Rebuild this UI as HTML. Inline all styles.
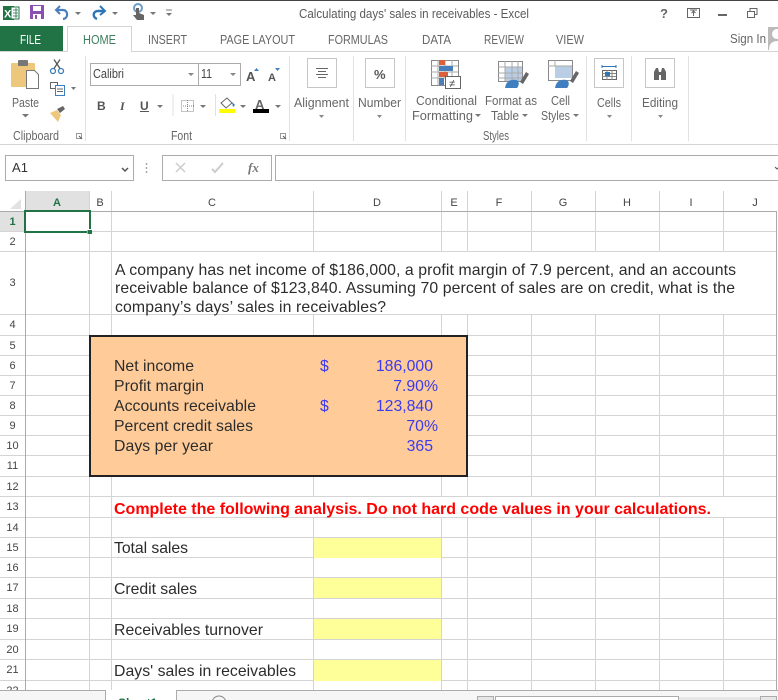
<!DOCTYPE html>
<html><head><meta charset="utf-8"><style>
html,body{margin:0;padding:0;background:#fff;width:778px;height:700px;overflow:hidden}
svg{display:block;position:absolute;left:0;top:0}
text{font-family:"Liberation Sans",sans-serif}
.r{font-size:12.5px;fill:#666}
.h{font-size:11px;fill:#444;text-anchor:middle}
.d{font-size:15.8px;fill:#2c2c2c}
.b{font-size:15.8px;fill:#3a3af0}
.e{text-anchor:end}
</style></head><body>
<svg width="778" height="700" viewBox="0 0 778 700" xmlns="http://www.w3.org/2000/svg">
<rect width="778" height="700" fill="#fff"/>
<rect width="778" height="1" fill="#444"/>
<!-- QAT -->
<rect x="3" y="6" width="11" height="14" fill="#217346"/><rect x="11" y="7" width="8" height="12" fill="#fff" stroke="#217346"/>
<path d="M13 10h5M13 13h5M13 16h5M16 8v10" stroke="#217346" stroke-width=".8"/>
<text x="4" y="17.5" style="font-size:11px;font-weight:bold;fill:#fff">X</text>
<rect x="30" y="5" width="14" height="14" fill="#8a4fb0"/><rect x="33" y="6" width="8" height="5" fill="#fff"/><rect x="33" y="14" width="8" height="5" fill="#fff"/><rect x="35" y="15" width="2" height="4" fill="#8a4fb0"/>
<path d="M60 6l-4 4 4 4" fill="none" stroke="#4a7ebb" stroke-width="2"/><path d="M57 10h6c5 0 6 8 0 9" fill="none" stroke="#4a7ebb" stroke-width="2.2"/>
<path d="M100 6l5 5-5 4" fill="none" stroke="#2e75b6" stroke-width="2"/><path d="M104 11h-6c-5 0-6 6-1 8" fill="none" stroke="#2e75b6" stroke-width="2.4"/>
<circle cx="138" cy="8" r="4" fill="none" stroke="#6f9bc8" stroke-width="2"/><path d="M136 8h3v5l5 2v5h-7l-4-5 3 0z" fill="#666"/>
<path d="M75 12h6l-3 3zM112 12h6l-3 3zM150 12h6l-3 3z" fill="#777"/>
<path d="M166 10h6" stroke="#777"/><path d="M166 13h6l-3 3z" fill="#777"/>
<text x="299" y="18" textLength="230" lengthAdjust="spacingAndGlyphs" style="font-size:12.5px;fill:#5a5a5a">Calculating days' sales in receivables - Excel</text>
<text x="660" y="18" style="font-size:13px;font-weight:bold;fill:#666">?</text>
<rect x="687.5" y="8.5" width="12" height="9" fill="none" stroke="#666"/><path d="M693.5 16v-5M691.5 13l2-2 2 2M690 10h7" fill="none" stroke="#666"/>
<rect x="718" y="14" width="9" height="2" fill="#666"/>
<rect x="747.5" y="11.5" width="7" height="6" fill="none" stroke="#666"/><path d="M750 11v-2.500h7v6h-2" fill="none" stroke="#666"/>
<!-- tabs -->
<rect x="0" y="51" width="778" height="1" fill="#d4d4d4"/>
<rect x="0" y="26" width="63" height="25" fill="#217346"/>
<rect x="67.500" y="26.500" width="64" height="25" fill="#fff" stroke="#d4d4d4"/><rect x="68" y="50" width="63" height="3" fill="#fff"/>
<text x="20" y="44" textLength="21" lengthAdjust="spacingAndGlyphs" style="font-size:12.5px;fill:#fff">FILE</text>
<text x="83" y="44" textLength="33" lengthAdjust="spacingAndGlyphs" style="font-size:12.5px;fill:#3e8060">HOME</text>
<text x="148" y="44" textLength="39" lengthAdjust="spacingAndGlyphs" class="r">INSERT</text>
<text x="220" y="44" textLength="75" lengthAdjust="spacingAndGlyphs" class="r">PAGE LAYOUT</text>
<text x="328" y="44" textLength="60" lengthAdjust="spacingAndGlyphs" class="r">FORMULAS</text>
<text x="422" y="44" textLength="29" lengthAdjust="spacingAndGlyphs" class="r">DATA</text>
<text x="484" y="44" textLength="40" lengthAdjust="spacingAndGlyphs" class="r">REVIEW</text>
<text x="556" y="44" textLength="28" lengthAdjust="spacingAndGlyphs" class="r">VIEW</text>
<text x="730" y="43" textLength="36" lengthAdjust="spacingAndGlyphs" class="r">Sign In</text>
<rect x="768" y="27" width="10" height="23" fill="#bbb"/><circle cx="777" cy="34" r="5" fill="#fff"/><path d="M769 50c0-7 4-9 9-9v9z" fill="#fff"/>
<!-- ribbon -->
<rect x="0" y="144" width="778" height="1" fill="#d4d4d4"/>
<path d="M85.500 56v85M289.500 56v85M353.500 56v85M405.500 56v85M586.500 56v85M631.500 56v85M688.500 56v85" stroke="#e1e1e1"/>
<!-- paste -->
<rect x="11" y="63" width="24" height="24" rx="1" fill="#edc77c"/><rect x="18" y="60" width="10" height="6" rx="1" fill="#777"/>
<path d="M26.500 70.500h8l4 4v14h-12z" fill="#fff" stroke="#777"/>
<text x="12" y="107" textLength="27" lengthAdjust="spacingAndGlyphs" class="r">Paste</text>
<path d="M22 114h7l-3.500 3.500z" fill="#777"/>
<circle cx="53" cy="71" r="2.500" fill="none" stroke="#3f7fbf" stroke-width="1.300"/><circle cx="61" cy="71" r="2.500" fill="none" stroke="#3f7fbf" stroke-width="1.300"/><path d="M54 68.500l6-9M60 68.500l-6-9" stroke="#555" stroke-width="1.300"/>
<path d="M50.500 82.500h7v6h-7z" fill="#fff" stroke="#666"/><rect x="55.500" y="85.500" width="9" height="10" fill="#fff" stroke="#3f7fbf"/><path d="M57 89h6M57 91.500h6" stroke="#666"/>
<path d="M71 87h5l-2.500 3z" fill="#777"/>
<path d="M50 113l7-3 4 5-3 7z" fill="#edc77c"/><path d="M57 109l6-3 2 3-5 4z" fill="#666"/>
<text x="13" y="140" textLength="46" lengthAdjust="spacingAndGlyphs" class="r">Clipboard</text>
<rect x="76.500" y="133.500" width="5" height="5" fill="none" stroke="#999"/><path d="M79 136l3 3" stroke="#555"/>
<!-- font -->
<rect x="90.500" y="63.500" width="150" height="22" fill="#fff" stroke="#ababab"/><path d="M198.500 63v23" stroke="#ababab"/>
<text x="93" y="78" textLength="31" lengthAdjust="spacingAndGlyphs" style="font-size:12.5px;fill:#444">Calibri</text>
<text x="201" y="78" textLength="11" lengthAdjust="spacingAndGlyphs" style="font-size:12.5px;fill:#444">11</text>
<path d="M188 73h6l-3 3zM230 73h6l-3 3z" fill="#888"/>
<text x="246" y="81" style="font-size:13px;fill:#555;font-weight:bold">A</text><path d="M254 71h5l-2.500-3z" fill="#3f7fbf"/>
<text x="268" y="81" style="font-size:11px;fill:#555;font-weight:bold">A</text><path d="M275 68h5l-2.500 3z" fill="#3f7fbf"/>
<text x="97" y="110" style="font-size:12px;font-weight:bold;fill:#555">B</text>
<text x="120" y="110" style="font-size:12px;font-style:italic;font-family:'Liberation Serif',serif;fill:#555;font-weight:bold">I</text>
<text x="140" y="110" style="font-size:12px;font-weight:bold;fill:#555">U</text><rect x="140" y="111" width="9" height="1" fill="#555"/>
<path d="M157 105h6l-3 3zM200 105h6l-3 3zM240 105h6l-3 3zM275 105h6l-3 3z" fill="#777"/>
<rect x="181.500" y="100.500" width="12" height="11" fill="none" stroke="#888" stroke-dasharray="1 1"/><path d="M187.500 100v12M181 106h13" stroke="#888" stroke-dasharray="1 1"/>
<rect x="172.500" y="94" width="1" height="22" fill="#e1e1e1"/><rect x="215" y="94" width="1" height="22" fill="#e1e1e1"/>
<path d="M221 103l6-5 5 5-6 5z" fill="#fff" stroke="#666"/><path d="M232 102l3 3-2 2z" fill="#2e75b6"/>
<rect x="219" y="109" width="16" height="4" fill="#ff0"/>
<text x="255" y="109" style="font-size:13px;font-weight:bold;fill:#666">A</text><rect x="253" y="109" width="16" height="4" fill="#000"/>
<text x="171" y="140" textLength="21" lengthAdjust="spacingAndGlyphs" class="r">Font</text>
<rect x="280.500" y="133.500" width="5" height="5" fill="none" stroke="#999"/><path d="M283 136l3 3" stroke="#555"/>
<!-- alignment -->
<rect x="307.500" y="58.500" width="29" height="29" fill="#fff" stroke="#c6c6c6"/><path d="M316 68.500h12M318 71.500h8M316 74.500h12M318 77.500h8" stroke="#666"/>
<text x="294" y="107" textLength="55" lengthAdjust="spacingAndGlyphs" class="r">Alignment</text><path d="M319 115h5l-2.500 3z" fill="#888"/>
<rect x="365.500" y="58.500" width="29" height="29" fill="#fff" stroke="#c6c6c6"/>
<text x="374" y="79" style="font-size:13px;fill:#555;font-weight:bold">%</text>
<text x="358" y="107" textLength="43" lengthAdjust="spacingAndGlyphs" class="r">Number</text><path d="M377 115h5l-2.500 3z" fill="#888"/>
<!-- styles -->
<rect x="431.500" y="60.500" width="27" height="25" fill="#fff" stroke="#888"/><path d="M431 66h27M431 72h27M431 78h27M438 60v25M445 60v18M452 60v18" stroke="#aaa"/>
<rect x="439" y="60" width="6" height="5" fill="#d9603b"/><rect x="439" y="66" width="14" height="5" fill="#4a7ebb"/><rect x="439" y="72" width="9" height="5" fill="#d9603b"/><rect x="439" y="78" width="5" height="7" fill="#4a7ebb"/>
<rect x="445.500" y="76.500" width="15" height="12" fill="#fff" stroke="#666"/><text x="449" y="87" style="font-size:11px;fill:#444">≠</text>
<text x="416" y="105" textLength="61" lengthAdjust="spacingAndGlyphs" class="r">Conditional</text><text x="412" y="120" textLength="61" lengthAdjust="spacingAndGlyphs" class="r">Formatting</text><path d="M475 114h6l-3 3z" fill="#777"/>
<rect x="498.500" y="61.500" width="24" height="20" fill="#fff" stroke="#888"/><rect x="505" y="67" width="17" height="14" fill="#b9cde5"/><path d="M498 67h24M498 73h24M498 78h24M505 61v20M512 61v20M518 61v20" stroke="#aaa"/>
<path d="M520 82l6-10 3 2-6 10z" fill="#666"/><path d="M505 88c1-7 6-9 11-8 4 1 3 6 1 8z" fill="#3f7fbf"/>
<text x="485" y="105" textLength="52" lengthAdjust="spacingAndGlyphs" class="r">Format as</text><text x="491" y="120" textLength="28" lengthAdjust="spacingAndGlyphs" class="r">Table</text><path d="M522 114h6l-3 3z" fill="#777"/>
<rect x="548.500" y="60.500" width="24" height="20" fill="#fff" stroke="#888"/><rect x="555" y="66" width="17" height="12" fill="#b9cde5"/><path d="M548 66h24M555 60v6" stroke="#aaa"/>
<path d="M570 81l6-10 3 2-6 10z" fill="#666"/><path d="M555 88c1-7 6-9 11-8 4 1 3 6 1 8z" fill="#3f7fbf"/>
<text x="551" y="105" textLength="19" lengthAdjust="spacingAndGlyphs" class="r">Cell</text><text x="541" y="120" textLength="29" lengthAdjust="spacingAndGlyphs" class="r">Styles</text><path d="M573 114h6l-3 3z" fill="#777"/>
<text x="483" y="140" textLength="26" lengthAdjust="spacingAndGlyphs" class="r">Styles</text>
<rect x="594.500" y="58.500" width="29" height="29" fill="#fff" stroke="#c6c6c6"/>
<path d="M602 66.500h14M602 65v3M616 65v3" stroke="#2e75b6"/><rect x="602.500" y="70.500" width="14" height="9" fill="#fff" stroke="#666"/><path d="M602 73.500h14M602 76.500h14M607 70v10M612 70v10" stroke="#888"/><rect x="605" y="72" width="5" height="4" fill="#2e75b6"/>
<text x="597" y="107" textLength="24" lengthAdjust="spacingAndGlyphs" class="r">Cells</text><path d="M607 115h5l-2.500 3z" fill="#888"/>
<rect x="645.500" y="58.500" width="29" height="29" fill="#fff" stroke="#c6c6c6"/>
<path d="M654 80v-8l2-4h2l1 4h2l1-4h2l2 4v8h-5v-5h-2v5z" fill="#666"/>
<text x="642" y="107" textLength="36" lengthAdjust="spacingAndGlyphs" class="r">Editing</text><path d="M658 115h5l-2.500 3z" fill="#888"/>
<!-- formula bar -->
<rect x="5.500" y="155.500" width="128" height="25" fill="#fff" stroke="#ababab"/>
<text x="12" y="172" textLength="16" style="font-size:13px;fill:#333">A1</text>
<path d="M122 168l3 3 3-3" fill="none" stroke="#555" stroke-width="1.500"/>
<path d="M146.500 163v2M146.500 167v2M146.500 171v2" stroke="#aaa" stroke-width="1.500"/>
<rect x="162.500" y="155.500" width="109" height="25" fill="#fff" stroke="#ababab"/>
<path d="M176 163l9 9M185 163l-9 9" stroke="#ccc" stroke-width="1.500"/>
<path d="M212 169l3 3 8-9" fill="none" stroke="#ccc" stroke-width="2"/>
<text x="248" y="172" style="font-size:13px;font-style:italic;font-weight:bold;font-family:'Liberation Serif',serif;fill:#777">fx</text>
<rect x="275.500" y="155.500" width="510" height="25" fill="#fff" stroke="#ababab"/>
<path d="M775 167l2 2 2-2" fill="none" stroke="#555"/>
<!-- grid headers -->
<rect x="26" y="191" width="63" height="20" fill="#e1e1e1"/>
<rect x="0" y="212" width="25" height="19" fill="#e1e1e1"/>
<path d="M21 199v10H10z" fill="#e2e2e2"/>
<g stroke="#d4d4d4" fill="none">
<path d="M0 231.500H776M0 251.500H776M0 314.500H776M0 335.500H776M0 355.500H776M0 375.500H776M0 395.500H776M0 415.500H776M0 435.500H776M0 455.500H776M0 476.500H776M0 496.500H776M0 517.500H776M0 537.500H776M0 557.500H776M0 577.500H776M0 598.500H776M0 618.500H776M0 639.500H776M0 659.500H776M0 680.500H776"/>
<path d="M89.500 191V690M111.500 191V690"/>
<path d="M313.500 191V251M441.500 191V251M467.500 191V251M531.500 191V251M595.500 191V251M659.500 191V251M723.500 191V251"/>
<path d="M313.500 315V497M441.500 315V497M467.500 315V497M531.500 315V497M595.500 315V497M659.500 315V497M723.500 315V497"/>
<path d="M313.500 517V690M441.500 517V690M467.500 517V690M531.500 517V690M595.500 517V690M659.500 517V690M723.500 517V690"/>
</g>
<path d="M25.500 191V690M0 211.500H776M776.500 211V690" stroke="#ababab" fill="none"/>
<text x="57" y="206" class="h" style="font-weight:bold;fill:#217346">A</text>
<text x="100" y="206" class="h">B</text><text x="212" y="206" class="h">C</text><text x="377" y="206" class="h">D</text><text x="454" y="206" class="h">E</text><text x="499" y="206" class="h">F</text><text x="563" y="206" class="h">G</text><text x="627" y="206" class="h">H</text><text x="691" y="206" class="h">I</text><text x="755" y="206" class="h">J</text>
<text x="12.500" y="225" class="h" style="font-weight:bold;fill:#217346">1</text>
<text x="12.500" y="245" class="h">2</text><text x="12.500" y="286" class="h">3</text><text x="12.500" y="328" class="h">4</text><text x="12.500" y="349" class="h">5</text><text x="12.500" y="369" class="h">6</text><text x="12.500" y="389" class="h">7</text><text x="12.500" y="409" class="h">8</text><text x="12.500" y="429" class="h">9</text><text x="12.500" y="449" class="h">10</text><text x="12.500" y="469" class="h">11</text><text x="12.500" y="490" class="h">12</text><text x="12.500" y="510" class="h">13</text><text x="12.500" y="531" class="h">14</text><text x="12.500" y="551" class="h">15</text><text x="12.500" y="571" class="h">16</text><text x="12.500" y="591" class="h">17</text><text x="12.500" y="612" class="h">18</text><text x="12.500" y="632" class="h">19</text><text x="12.500" y="653" class="h">20</text><text x="12.500" y="673" class="h">21</text><text x="12.500" y="694" class="h">22</text>
<rect x="25" y="211" width="65" height="21" fill="none" stroke="#217346" stroke-width="2"/>
<rect x="87" y="229" width="5" height="5" fill="#fff"/><rect x="87.500" y="230" width="4.500" height="4" fill="#217346"/>
<!-- paragraph -->
<text x="115" y="275" class="d" textLength="621">A company has net income of $186,000, a profit margin of 7.9 percent, and an accounts</text>
<text x="115" y="293" class="d" textLength="620">receivable balance of $123,840. Assuming 70 percent of sales are on credit, what is the</text>
<text x="115" y="312" class="d" textLength="271">company’s days’ sales in receivables?</text>
<!-- box -->
<rect x="90" y="336" width="377" height="140" fill="#ffcc99" stroke="#222" stroke-width="2"/>
<text x="114" y="371" class="d" textLength="80">Net income</text><text x="114" y="391" class="d" textLength="90">Profit margin</text><text x="114" y="411" class="d" textLength="142">Accounts receivable</text><text x="114" y="431" class="d" textLength="139">Percent credit sales</text><text x="114" y="451" class="d" textLength="99">Days per year</text>
<text x="320" y="371" class="b">$</text><text x="320" y="411" class="b">$</text>
<text x="433" y="371" class="b e">186,000</text><text x="438" y="391" class="b e">7.90%</text><text x="433" y="411" class="b e">123,840</text><text x="438" y="431" class="b e">70%</text><text x="433" y="451" class="b e">365</text>
<text x="114" y="514" textLength="597" style="font-size:16px;font-weight:bold;fill:#f00">Complete the following analysis. Do not hard code values in your calculations.</text>
<rect x="314" y="538" width="127" height="20" fill="#ffff99"/><rect x="314" y="578" width="127" height="20" fill="#ffff99"/><rect x="314" y="619" width="127" height="20" fill="#ffff99"/><rect x="314" y="660" width="127" height="21" fill="#ffff99"/>
<text x="114" y="553" class="d" textLength="74">Total sales</text><text x="114" y="594" class="d" textLength="83">Credit sales</text><text x="114" y="635" class="d" textLength="149">Receivables turnover</text><text x="114" y="676" class="d" textLength="182">Days' sales in receivables</text>
<!-- bottom -->
<rect x="0" y="690" width="778" height="10" fill="#f6f6f6"/><rect x="0" y="690" width="778" height="1" fill="#ababab"/>
<rect x="106" y="690" width="70" height="10" fill="#fff"/><path d="M105.500 690v10M176.500 690v10" stroke="#ababab"/>
<text x="118" y="707" style="font-size:12px;font-weight:bold;fill:#217346">Sheet1</text>
<circle cx="219" cy="703" r="7" fill="none" stroke="#888"/>
<rect x="477.500" y="696.500" width="16" height="6" fill="#e6e6e6" stroke="#ababab"/>
<rect x="495.500" y="696.500" width="183" height="6" fill="#fff" stroke="#ababab"/>
<rect x="679" y="697" width="81" height="3" fill="#e6e6e6"/>
<rect x="760.500" y="696.500" width="16" height="6" fill="#e6e6e6" stroke="#ababab"/>
</svg>
</body></html>
